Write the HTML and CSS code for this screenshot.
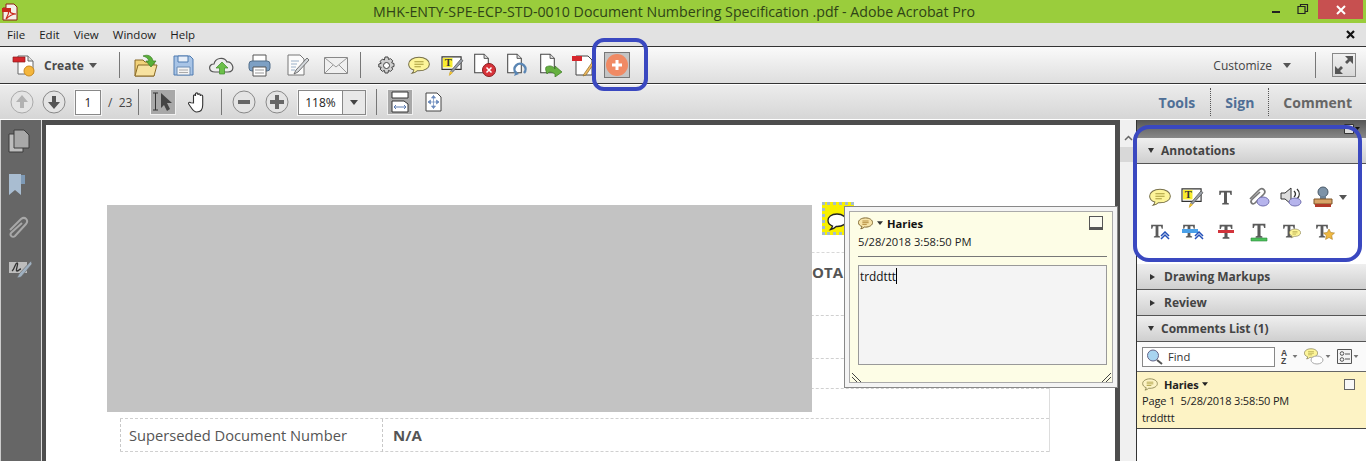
FILE: index.html
```html
<!DOCTYPE html>
<html lang="en">
<head>
<meta charset="utf-8">
<title>Adobe Acrobat Pro</title>
<link rel="stylesheet" href="styles.css">
</head>
<body>
<svg class="defs" width="0" height="0" aria-hidden="true">
  <defs>
    <symbol id="bubble" viewBox="0 0 24 20"><path d="M12 1C5.500 1 .7 4.300.7 8.500c0 2.900 2.300 5.200 5.700 6.400-.3 1.400-1 2.700-2 3.600 2.500-.3 4.400-1.300 5.700-2.800.6.100 1.300.1 1.900.1 6.500 0 11.300-3.200 11.300-7.300S18.500 1 12 1z" fill="#fdf59a" stroke="#77704a" stroke-width="1.100"/><path d="M7 6h10M7 8.700h10M7 11.400h7" stroke="#a89c3c" stroke-width="1.100" fill="none"/></symbol>
    <symbol id="textnote" viewBox="0 0 24 22"><path d="M1 2h20v13H1z" fill="#fff" stroke="#333" stroke-width="1.200"/><path d="M2 3h10v10H2z" fill="#f8ec30"/><text x="4" y="11.500" font-size="11" font-weight="700" fill="#333" font-family="Liberation Serif, serif">T</text><path d="M23 6L12 18l-3 3 1-4L21 4z" fill="#9aa0a8" stroke="#555" stroke-width=".8"/><path d="M8 22l1.500-5 3 1.500z" fill="#f2c230"/></symbol>
    <symbol id="doc" viewBox="0 0 20 24"><path d="M2 1h11l5 5v17H2z" fill="#fff" stroke="#444" stroke-width="1.200"/><path d="M13 1v5h5" fill="#ddd" stroke="#444"/></symbol>
    <symbol id="bigt" viewBox="0 0 18 20"><path d="M1.500 2h15v5h-1.400l-1-3H10.800v12.200l2.200.8v1.500H5V17l2.200-.8V4H3.900l-1 3H1.500z" fill="#5a5a5a"/></symbol>
    <symbol id="chev" viewBox="0 0 10 9"><path d="M1 5l4-4 4 4M1 8l4-4 4 4" fill="none" stroke="#2450b8" stroke-width="1.500"/></symbol>
    <symbol id="caret" viewBox="0 0 8 5"><path d="M0 0h8L4 5z" fill="currentColor"/></symbol>
    <symbol id="round-up" viewBox="0 0 24 24"><circle cx="12" cy="12" r="11" fill="#e4e4e4" stroke="#aaa"/><path d="M12 5l6 7h-4v6h-4v-6H6z" fill="#b2b2b2"/></symbol>
    <symbol id="round-down" viewBox="0 0 24 24"><circle cx="12" cy="12" r="11" fill="#e4e4e4" stroke="#888"/><path d="M12 19l-6-7h4V6h4v6h4z" fill="#555"/></symbol>
    <symbol id="round-minus" viewBox="0 0 24 24"><circle cx="12" cy="12" r="11" fill="#e4e4e4" stroke="#888"/><path d="M6 10h12v4H6z" fill="#666"/></symbol>
    <symbol id="round-plus" viewBox="0 0 24 24"><circle cx="12" cy="12" r="11" fill="#e4e4e4" stroke="#888"/><path d="M10 5h4v5h5v4h-5v5h-4v-5H5v-4h5z" fill="#666"/></symbol>
  </defs>
</svg>

<div class="window">
  <header class="titlebar">
    <svg class="appicon" width="18" height="18" viewBox="0 0 18 18"><path d="M2 5h3V1h8l3 3v13H2z" fill="#f4efe8" stroke="#8e1f16"/><path d="M1 5h9v4H1z" fill="#c9281c"/><path d="M5 16c2-3 3-6 3-10 0 3 2 5 7 5-4 0-7 2-10 5z" fill="none" stroke="#c9281c" stroke-width="1.200"/></svg>
    <h1 class="doc-title">MHK-ENTY-SPE-ECP-STD-0010 Document Numbering Specification .pdf - Adobe Acrobat Pro</h1>
    <div class="winctl">
      <svg class="winbtn" width="26" height="19" viewBox="0 0 26 19"><path d="M6 11h8v2H6z" fill="#222"/></svg>
      <svg class="winbtn" width="26" height="19" viewBox="0 0 26 19"><path d="M6 6.500h7v7H6zM8.500 6.500v-2h7v7h-2.500" fill="none" stroke="#222" stroke-width="1.200"/></svg>
      <div class="closebtn"><svg width="12" height="12" viewBox="0 0 12 12"><path d="M2 2l8 8M10 2l-8 8" stroke="#fff" stroke-width="2"/></svg></div>
    </div>
  </header>

  <nav class="menubar">
    <span>File</span><span>Edit</span><span>View</span><span>Window</span><span>Help</span>
    <svg class="menu-x" width="9" height="9" viewBox="0 0 9 9"><path d="M1 1l7 7M8 1L1 8" stroke="#111" stroke-width="2.200"/></svg>
  </nav>

  <div class="toolbar tb1">
    <svg class="create-icon" width="24" height="24" viewBox="0 0 24 24"><path d="M6 3h10l5 5v13H6z" fill="#fff" stroke="#666"/><path d="M16 3v5h5" fill="#e4e4e4" stroke="#666"/><path d="M1 4h12v5H1z" fill="#d6262c" stroke="#8c1a1e" stroke-width=".7"/><circle cx="17" cy="18" r="5" fill="#f4b63c" stroke="#c98a20"/></svg>
    <b class="create-label">Create</b>
    <svg class="tcaret" width="8" height="5"><use href="#caret"/></svg>
    <i class="sep s-a"></i>
    <div class="slot38"><svg width="26" height="26" viewBox="0 0 26 26"><path d="M2 8h8l2 2h9v14H2z" fill="#f2d27a" stroke="#8a6b28"/><path d="M2 24l3-11h19l-3 11z" fill="#f7e2a0" stroke="#8a6b28"/><path d="M10 4c5-2 9 0 10 5h3l-5 6-5-6h3c-1-3-3-4-6-5z" fill="#58b038" stroke="#3a7d22" stroke-width=".7"/></svg></div>
    <div class="slot38"><svg width="21" height="21" viewBox="0 0 21 21"><path d="M1 1h16l3 3v16H1z" fill="#a8c4e6" stroke="#4f7bb0"/><path d="M5 1h10v6H5z" fill="#e8eff8" stroke="#4f7bb0"/><path d="M4 12h13v8H4z" fill="#f3f3f3" stroke="#6a8cb4"/><path d="M6 15h9M6 17.500h9" stroke="#aaa"/></svg></div>
    <div class="slot38"><svg width="26" height="20" viewBox="0 0 26 20"><path d="M6 17c-7 0-7-8-1-8 1-6 10-8 13-2 6-1 9 10 1 10z" fill="#eee" stroke="#555" stroke-width="1.200"/><path d="M13 7l6 6h-3.500v6h-5v-6H7z" fill="#6cc04a" stroke="#3c8a28" stroke-width=".7"/></svg></div>
    <div class="slot38"><svg width="23" height="23" viewBox="0 0 23 23"><path d="M5 1h13v7H5z" fill="#fff" stroke="#555"/><rect x="1" y="7" width="21" height="10" rx="3" fill="#7da0c4" stroke="#54708c"/><path d="M5 13h13v9H5z" fill="#fff" stroke="#555"/><path d="M7 16h9M7 19h9" stroke="#999"/></svg></div>
    <div class="slot38"><svg width="22" height="22" viewBox="0 0 22 22"><path d="M1 1h12l4 4v16H1z" fill="#fbfbfb" stroke="#777"/><path d="M4 7h8M4 10h6M4 13h5M4 16h4" stroke="#9ab0c8"/><path d="M20 4L9 16l-2 4 4-2L22 6z" fill="#d4d8dc" stroke="#555" stroke-width=".8"/></svg></div>
    <div class="slot38"><svg width="24" height="17" viewBox="0 0 24 17"><path d="M.5.500h23v16H.5z" fill="#f0f0f0" stroke="#888"/><path d="M1 1l11 9L23 1M1 16l8-8M23 16l-8-8" fill="none" stroke="#999"/></svg></div>
    <i class="sep s-b"></i>
    <div class="slot33 first"><svg width="19" height="19" viewBox="0 0 19 19"><path d="M8 1h3l.5 2.500 2-.9 2.200 2.200-1 2 2.300.7v3l-2.300.7 1 2-2.200 2.200-2-1-.5 2.600H8l-.6-2.600-2 1-2.200-2.200 1-2L1.800 11V8l2.400-.7-1-2 2.200-2.200 2 .9z" fill="#cfcfcf" stroke="#444"/><circle cx="9.500" cy="9.500" r="3" fill="#fff" stroke="#444"/></svg></div>
    <div class="slot33"><svg width="22" height="19"><use href="#bubble"/></svg></div>
    <div class="slot33"><svg width="23" height="21"><use href="#textnote"/></svg></div>
    <div class="slot33"><svg class="doc-ic" width="24" height="24" viewBox="0 0 24 24"><use href="#doc" width="17" height="21"/><circle cx="16" cy="17" r="6.500" fill="#d8333a" stroke="#8a1c20"/><path d="M13.500 14.500l5 5M18.500 14.500l-5 5" stroke="#fff" stroke-width="1.500"/></svg></div>
    <div class="slot33"><svg class="doc-ic" width="24" height="24" viewBox="0 0 24 24"><use href="#doc" width="17" height="21"/><path d="M10 20a5.500 5.500 0 1 1 8 0" fill="none" stroke="#5a86b4" stroke-width="2.500"/><path d="M8 23l2-5 3 3z" fill="#5a86b4"/></svg></div>
    <div class="slot33"><svg class="doc-ic" width="24" height="24" viewBox="0 0 24 24"><use href="#doc" width="17" height="21"/><path d="M7 14c4-2 7-1 9 2v-3l7 6-7 5v-3c-3-2-6-3-8 0-1-3-2-5-1-7z" fill="#66b040" stroke="#3c7a24" stroke-width=".7"/></svg></div>
    <div class="slot33"><svg class="doc-ic" width="24" height="24" viewBox="0 0 24 24"><path d="M4 3h12l4 4v15H4z" fill="#fff" stroke="#444"/><path d="M0 3h10v5H0z" fill="#d6262c"/><path d="M21 8L12 21l-1 2 3-1 9-13z" fill="#eeb860" stroke="#8a6b28" stroke-width=".7"/></svg></div>
    <div class="plus-tile"><span class="plus-disc"><svg width="12" height="12" viewBox="0 0 12 12"><path d="M4.500 1h3v3.500H11v3H7.500V11h-3V7.500H1v-3h3.500z" fill="#fff"/></svg></span></div>
    <span class="customize">Customize</span>
    <svg class="tcaret cust-caret" width="8" height="5"><use href="#caret"/></svg>
    <i class="sep s-c"></i>
    <div class="expand"><svg width="22" height="22" viewBox="0 0 22 22"><path d="M12 2h8v8l-3-3-3 3-2-2 3-3zM10 20H2v-8l3 3 3-3 2 2-3 3z" fill="#555"/></svg></div>
  </div>

  <div class="toolbar tb2">
    <svg class="rnd r1" width="24" height="24"><use href="#round-up"/></svg>
    <svg class="rnd r2" width="24" height="24"><use href="#round-down"/></svg>
    <span class="field page-field">1</span>
    <span class="page-total">/&nbsp; 23</span>
    <i class="sep s-d"></i>
    <div class="tile"><svg width="22" height="20" viewBox="0 0 22 20"><path d="M1 1h5M1 18h5M3.500 1v17" stroke="#333" fill="none"/><path d="M9 1l11 10h-5l3 6-3 2-3-6-3 3z" fill="#444"/></svg></div>
    <svg class="hand" width="21" height="22" viewBox="0 0 20 22"><path d="M5 12V5c0-1.500 2-1.500 2 0v-2c0-1.500 2.400-1.500 2.400 0v1c0-1.500 2.400-1.500 2.400 0v1c0-1.500 2.400-1.300 2.400.3V14c0 4-2 7-6 7-3 0-4-2-6-5l-2-3c-.7-1.300 1-2.400 2-1.300z" fill="#fff" stroke="#333" stroke-width="1.100"/></svg>
    <i class="sep s-e"></i>
    <svg class="rnd r3" width="24" height="24"><use href="#round-minus"/></svg>
    <svg class="rnd r4" width="24" height="24"><use href="#round-plus"/></svg>
    <div class="zoombox"><span class="zoomval">118%</span><span class="zoomdrop"><svg width="8" height="5"><use href="#caret"/></svg></span></div>
    <i class="sep s-f"></i>
    <div class="tile t2"><svg width="18" height="22" viewBox="0 0 18 22"><path d="M1 1h16v6H1z" fill="#fff" stroke="#333"/><path d="M1 10h12l4 3v8H1z" fill="#fff" stroke="#333"/><path d="M3 16h12M3 16l2-2M3 16l2 2M15 16l-2-2M15 16l-2 2" stroke="#5a7ab0" fill="none"/></svg></div>
    <svg class="fitpage" width="17" height="20" viewBox="0 0 17 20"><path d="M1 1h11l4 4v14H1z" fill="#fff" stroke="#444"/><path d="M8.500 3.500v13M3 10h11M8.500 3.500l-2 2.500h4zM8.500 16.500l-2-2.500h4zM3 10l2.500-2v4zM14 10l-2.500-2v4z" fill="#6a8abc" stroke="#6a8abc" stroke-width=".7"/></svg>
    <div class="panes">
      <a class="pane blue">Tools</a><i class="dots d1"></i><a class="pane blue">Sign</a><i class="dots"></i><a class="pane gray">Comment</a>
    </div>
  </div>

  <main class="workspace">
    <aside class="rail">
      <svg width="22" height="24" viewBox="0 0 22 24"><path d="M1 5h14v18H1z" fill="#bdbdbd" stroke="#3c3c3c"/><path d="M6 1h10l5 5v13H6z" fill="#a8a8a8" stroke="#3c3c3c"/></svg>
      <svg width="18" height="23" viewBox="0 0 18 23"><path d="M1 1h12v21l-6-5-6 5z" fill="#a9bdd1"/><path d="M13 2h4v9h-4z" fill="#7e9ab6"/></svg>
      <svg width="22" height="24" viewBox="0 0 22 24"><path d="M2 14L13 3c4-3 8 1 5 5L7 20c-2.500 2.500-6-1-3.500-3.500L14 7" fill="none" stroke="#a8a8a8" stroke-width="2"/></svg>
      <svg width="24" height="19" viewBox="0 0 24 19"><path d="M1 2h18v11H1z" fill="#bdbdbd"/><path d="M4 11c3-2 3-8 5-8s-2 8 0 8 2-2 4-2" fill="none" stroke="#333" stroke-width="1.300"/><path d="M23 1L11 14l-2 4 4-1L24 4z" fill="#9fb0c0" stroke="#666" stroke-width=".6"/></svg>
    </aside>

    <section class="viewer">
      <article class="page">
        <div class="doc-table">
          <div class="row r-a"><span class="ota">OTA</span></div>
          <div class="row r-b"></div>
          <div class="row r-c"></div>
          <div class="row r-d"></div>
          <div class="row r-e"><span class="cell-key">Superseded Document Number</span><span class="cell-val">N/A</span></div>
        </div>
        <div class="redact"></div>
        <div class="note-mark"><svg width="22" height="20" viewBox="0 0 22 20"><path d="M11 2C5 2 2 5 2 8.500c0 2.500 1.800 4.500 4.500 5.500-.3 1.400-1 2.500-2 3.500 2.500-.4 4.300-1.500 5.700-3h1c6 0 9-3 9-6S17 2 11 2z" fill="#fff" stroke="#222" stroke-width="1.300"/></svg></div>
        <div class="popup">
          <div class="popup-in">
            <div class="popup-head">
              <svg width="15" height="13" viewBox="0 0 24 20"><path d="M12 1C5.500 1 .7 4.300.7 8.500c0 2.900 2.300 5.200 5.700 6.400-.3 1.400-1 2.700-2 3.600 2.500-.3 4.400-1.300 5.700-2.800.6.100 1.300.1 1.900.1 6.500 0 11.300-3.200 11.300-7.300S18.500 1 12 1z" fill="#f7e4a8" stroke="#77602a" stroke-width="1.500"/><path d="M7 6h10M7 8.700h10M7 11.400h7" stroke="#a87c2c" stroke-width="1.300" fill="none"/></svg>
              <svg class="pcaret" width="6" height="4"><use href="#caret"/></svg>
              <b>Haries</b>
              <span class="minbtn"></span>
            </div>
            <div class="popup-date">5/28/2018 3:58:50 PM</div>
            <div class="popup-body"><span class="typed">trddttt</span></div>
            <div class="grips">
              <svg width="10" height="10" viewBox="0 0 10 10"><path d="M0 1l9 9M0 5l5 5" stroke="#444" fill="none"/></svg>
              <svg width="10" height="10" viewBox="0 0 10 10"><path d="M10 1l-9 9M10 5l-5 5" stroke="#444" fill="none"/></svg>
            </div>
          </div>
        </div>
      </article>
    </section>

    <div class="scrollbar">
      <svg width="9" height="6" viewBox="0 0 9 6"><path d="M1 5l3.500-3.500L8 5" fill="none" stroke="#666" stroke-width="1.500"/></svg>
      <div class="thumb"></div>
    </div>

    <aside class="panel">
      <div class="panel-top">
        <svg width="16" height="10" viewBox="0 0 16 10"><path d="M.5.500h9v9h-9z" fill="#ddd" stroke="#333"/><path d="M11 3h5l-2.500 3z" fill="#111"/></svg>
      </div>
      <div class="sect-head"><span class="tri-d"></span>Annotations</div>
      <div class="annot">
        <div class="annot-row">
          <span class="ai"><svg width="22" height="19"><use href="#bubble"/></svg></span>
          <span class="ai"><svg width="23" height="21"><use href="#textnote"/></svg></span>
          <span class="ai"><svg width="15" height="17"><use href="#bigt"/></svg></span>
          <span class="ai"><svg width="22" height="22" viewBox="0 0 22 22"><path d="M2 13L11 4c3.500-3.500 8 1 4.500 4.500L7 17c-2.500 2.500-5.500-1-3-3.500L12 6" fill="none" stroke="#777" stroke-width="1.700"/><ellipse cx="15" cy="15.500" rx="6" ry="4.500" fill="#b6b4ec" stroke="#7270b0"/></svg></span>
          <span class="ai"><svg width="23" height="22" viewBox="0 0 23 22"><path d="M1 7h4l6-5v16l-6-5H1z" fill="#ddd" stroke="#333"/><path d="M14 5c2 2 2 4 0 6M17 3c3 3 3 7 0 10" fill="none" stroke="#333" stroke-width="1.300"/><ellipse cx="15" cy="16" rx="6" ry="4" fill="#b6b4ec" stroke="#7270b0"/></svg></span>
          <span class="ai stamp"><svg width="22" height="22" viewBox="0 0 22 22"><circle cx="11" cy="6" r="5" fill="#7d93a8" stroke="#4a5a68"/><path d="M8 10h6v4H8z" fill="#6d8296"/><path d="M2 13h18v5H2z" fill="#d8a468" stroke="#7a5428"/><path d="M3 18h16v3H3z" fill="#b33a2a"/></svg><svg class="stamp-caret" width="8" height="5"><use href="#caret"/></svg></span>
        </div>
        <div class="annot-row second">
          <span class="ai"><svg width="20" height="18" viewBox="0 0 20 18"><use href="#bigt" width="14" height="16"/><use href="#chev" x="10" y="8" width="10" height="9"/></svg></span>
          <span class="ai"><svg width="22" height="18" viewBox="0 0 22 18"><use href="#bigt" width="14" height="16"/><path d="M0 6h16v4H0z" fill="#4aa0e8"/><use href="#chev" x="12" y="8" width="10" height="9"/></svg></span>
          <span class="ai"><svg width="18" height="18" viewBox="0 0 18 18"><use href="#bigt" width="18" height="17"/><path d="M1 7h16v3H1z" fill="#d2343c"/></svg></span>
          <span class="ai"><svg width="18" height="20" viewBox="0 0 18 20"><use href="#bigt" width="18" height="17"/><path d="M1 16h16v3H1z" fill="#4cc05a" stroke="#2d8a3c" stroke-width=".6"/></svg></span>
          <span class="ai"><svg width="19" height="18" viewBox="0 0 19 18"><use href="#bigt" width="14" height="16"/><use href="#bubble" x="7" y="5" width="12" height="11"/></svg></span>
          <span class="ai"><svg width="20" height="18" viewBox="0 0 20 18"><use href="#bigt" width="14" height="16"/><path d="M14 6l1.700 3.500 3.800.5-2.800 2.600.7 3.800-3.400-1.900-3.400 1.900.7-3.800L8.500 10l3.800-.5z" fill="#f0b840" stroke="#a87a20" stroke-width=".6"/></svg></span>
        </div>
      </div>
      <div class="sect-head"><span class="tri-r"></span>Drawing Markups</div>
      <div class="sect-head"><span class="tri-r"></span>Review</div>
      <div class="sect-head"><span class="tri-d"></span>Comments List (1)</div>
      <div class="findbar">
        <div class="findbox">
          <svg width="18" height="16" viewBox="0 0 18 16"><circle cx="7" cy="6.500" r="5.500" fill="#a8d4f0" stroke="#668"/><path d="M11 11l5 4" stroke="#555" stroke-width="2"/></svg>
          <span>Find</span>
        </div>
        <div class="findtools">
          <span class="ft"><svg width="11" height="16" viewBox="0 0 11 16"><text x="1" y="7" font-size="8.500" font-weight="700" fill="#444" font-family="Liberation Sans, sans-serif">A</text><text x="1" y="15" font-size="8.500" font-weight="700" fill="#444" font-family="Liberation Sans, sans-serif">Z</text></svg><svg class="ftc" width="6" height="3"><use href="#caret"/></svg></span>
          <span class="ft"><svg width="20" height="17" viewBox="0 0 20 17"><use href="#bubble" width="14" height="12"/><ellipse cx="13" cy="12" rx="6" ry="4" fill="#fff" stroke="#aaa"/></svg><svg class="ftc" width="6" height="3"><use href="#caret"/></svg></span>
          <span class="ft"><svg width="15" height="15" viewBox="0 0 15 15"><path d="M.5.500h14v14H.5z" fill="#f4f4f4" stroke="#555"/><circle cx="5" cy="4.500" r="1.800" fill="none" stroke="#555"/><circle cx="5" cy="10.500" r="1.800" fill="none" stroke="#555"/><path d="M8 5h5M8 10h5" stroke="#555"/></svg><svg class="ftc" width="6" height="3"><use href="#caret"/></svg></span>
        </div>
      </div>
      <div class="comment">
        <div class="comment-head">
          <svg width="16" height="15" viewBox="0 0 24 20"><path d="M12 1.500C5.800 1.500 1 4.600 1 8.700c0 2.800 2.200 5 5.400 6.200-.3 1.400-1 2.600-2 3.500 2.500-.3 4.400-1.300 5.700-2.800.6.100 1.300.1 1.900.1 6.200 0 11-3 11-7S18.200 1.500 12 1.500z" fill="#fdf3c5" stroke="#8a8350" stroke-width="1.300"/><path d="M7 6.500h10M7 9h10M7 11.500h7" stroke="#a89c3c" stroke-width="1.200" fill="none"/></svg>
          <b>Haries</b>
          <svg class="ccaret" width="6" height="4"><use href="#caret"/></svg>
          <span class="chk"></span>
        </div>
        <div class="cline">Page 1&nbsp; 5/28/2018 3:58:50 PM</div>
        <div class="cline">trddttt</div>
      </div>
    </aside>
  </main>

  <div class="ring ring-plus"></div>
  <div class="ring ring-annot"></div>
</div>
</body>
</html>
```

FILE: styles.css
```css
* { box-sizing: border-box; }
html, body { margin: 0; height: 461px; overflow: hidden; background: #fff; }
body { font-family: "Open Sans", "Noto Sans", sans-serif; font-size: 12px; color: #222; }
.defs { position: absolute; }
svg { display: block; flex: none; }
i { font-style: normal; }

.window { position: relative; width: 1366px; height: 461px; overflow: hidden; }

/* Title bar */
.titlebar { height: 23px; background: #9acd3c; display: flex; align-items: flex-start; position: relative; }
.appicon { margin: 3px 0 0 1px; }
.doc-title { position: absolute; left: 373px; top: 2px; margin: 0; font-size: 14.2px; line-height: 20px; font-weight: 400; color: #2f4416; white-space: nowrap; }
.winctl { margin-left: auto; margin-right: 3px; display: flex; }
.closebtn { width: 45px; height: 19px; background: #c75050; display: flex; align-items: center; justify-content: center; }

/* Menu */
.menubar { height: 23px; background: #e2e2e2; display: flex; align-items: center; padding-left: 7px; gap: 14px; font-size: 11.5px; color: #1c1c1c; }
.menu-x { margin-left: auto; margin-right: 11px; }

/* Toolbars */
.toolbar { display: flex; align-items: center; position: relative; }
.tb1 { height: 38px; border-top: 1px solid #333; border-bottom: 1px solid #333; background: linear-gradient(#fafafa, #dedede); padding-left: 12px; }
.tb2 { height: 36px; border-top: 1px solid #fff; border-bottom: 1px solid #fff; background: linear-gradient(#ececec, #d6d6d6); }
.create-label { margin-left: 8px; font-size: 12px; font-weight: 700; color: #4a4a4a; }
.tcaret { color: #555; margin-left: 5px; }
.sep { width: 1px; height: 26px; background: #777; flex: none; }
.s-a { margin-left: 22px; margin-right: 7px; }
.s-b { margin-left: 5px; }
.s-c { margin-left: 24px; }
.slot38 { width: 38px; display: flex; justify-content: center; }
.slot33 { width: 33px; display: flex; justify-content: center; }
.slot33.first { margin-left: 9px; }
.plus-tile { width: 26px; height: 26px; margin-left: 3px; background: #c4c4c4; border: 1px solid #777; display: flex; align-items: center; justify-content: center; }
.plus-disc { width: 22px; height: 22px; border-radius: 50%; background: #f08a64; display: flex; align-items: center; justify-content: center; }
.customize { margin-left: auto; font-size: 12px; color: #444; }
.cust-caret { margin-left: 11px; }
.expand { width: 24px; height: 24px; margin-left: 16px; margin-right: 10px; background: linear-gradient(#f0f0f0, #d8d8d8); border: 1px solid #888; display: flex; align-items: center; justify-content: center; }

.r1 { margin-left: 10px; }
.r2 { margin-left: 8px; }
.field, .zoombox { height: 25px; background: #fff; border: 1px solid #888; box-shadow: 0 0 0 1px #f4f4f4; }
.page-field { width: 26px; margin-left: 9px; display: flex; align-items: center; justify-content: center; font-size: 12px; }
.page-total { margin-left: 7px; width: 25px; font-size: 12px; color: #444; white-space: nowrap; }
.s-d { margin-left: 5px; }
.tile { width: 26px; height: 26px; margin-left: 11px; background: #a8a8a8; border: 1px solid #f0f0f0; display: flex; align-items: center; justify-content: center; }
.hand { margin-left: 12px; }
.s-e { margin-left: 12px; }
.r3 { margin-left: 10px; }
.r4 { margin-left: 9px; }
.zoombox { width: 68px; margin-left: 9px; display: flex; }
.zoomval { flex: 1; display: flex; align-items: center; justify-content: center; font-size: 12px; }
.zoomdrop { width: 23px; border-left: 1px solid #888; background: #e8e8e8; display: flex; align-items: center; justify-content: center; color: #444; }
.s-f { margin-left: 10px; }
.t2 { margin-left: 10px; }
.fitpage { margin-left: 12px; }
.panes { margin-left: auto; margin-right: 14px; display: flex; align-items: center; font-size: 14px; font-weight: 700; }
.pane { display: block; }
.blue { color: #4f6f96; }
.gray { color: #666; }
.dots { width: 0; height: 28px; border-left: 1px dotted #555; margin: 0 14px; }
.d1 { margin-left: 15px; }

/* Workspace */
.workspace { height: 341px; display: flex; align-items: stretch; }
.rail { width: 42px; flex: none; background: #666; border-left: 1px solid #ccc; border-right: 1px solid #ddd; padding-top: 9px; padding-left: 7px; display: flex; flex-direction: column; gap: 20px; align-items: flex-start; }
.viewer { width: 1078px; flex: none; background: #4d4d4d; padding: 5px 5px 0 4px; }
.page { position: relative; height: 336px; background: #fff; padding: 127px 0 0 74px; }

.doc-table { width: 930px; border-top: 1px dashed #d8d8d8; border-right: 1px solid #ddd; }
.row { border-bottom: 1px dashed #d0d0d0; display: flex; align-items: center; color: #555; }
.r-a { height: 63px; padding-left: 692px; align-items: flex-start; padding-top: 9px; }
.r-b { height: 43px; }
.r-c { height: 30px; }
.r-d { height: 30px; }
.r-e { height: 33px; border-left: 1px dashed #c8c8c8; padding-left: 8px; font-size: 15px; }
.ota { font-weight: 700; font-size: 15px; color: #555; }
.cell-key { width: 254px; line-height: 33px; border-right: 1px dashed #c8c8c8; color: #555; font-size: 14.7px; }
.cell-val { margin-left: 10px; font-weight: 700; color: #555; }

.redact { position: absolute; left: 61px; top: 80px; width: 705px; height: 207px; background: #c3c3c3; }
.note-mark { position: absolute; left: 776px; top: 77px; width: 32px; height: 33px; padding: 7px 0 0 1px; background: #f8f000; border: 3px dotted #a4bccc; }
.popup { position: absolute; left: 798px; top: 81px; width: 274px; height: 182px; background: #f4f4f4; border: 1px solid #888; padding: 4px; }
.popup-in { height: 100%; background: #fdfde6; border: 1px solid #aaa; padding: 0 5px 0 8px; }
.popup-head { height: 22px; display: flex; align-items: center; }
.popup-head b { font-size: 11.2px; color: #111; margin-left: 4px; }
.pcaret { color: #333; margin-left: 4px; }
.minbtn { margin-left: auto; margin-right: 4px; width: 14px; height: 14px; border: 1px solid #555; border-bottom-width: 3px; background: #fbfbf0; }
.popup-date { font-size: 11.2px; line-height: 15px; color: #222; padding-bottom: 7px; border-bottom: 1px solid #777; }
.popup-body { height: 100px; margin-top: 8px; background: #f4f4f4; border: 1px solid #999; padding: 1px 1px; font-size: 11.8px; line-height: 18px; color: #111; }
.typed { border-right: 1px solid #000; }
.grips { display: flex; justify-content: space-between; margin: 7px -4px 0 -6px; }

.scrollbar { width: 16px; flex: none; background: #f0f0f0; display: flex; flex-direction: column; align-items: center; padding-top: 15px; }
.thumb { width: 16px; height: 15px; margin-top: 6px; background: #d8d8d8; }

/* Right panel */
.panel { width: 230px; flex: none; border-left: 1px solid #333; background: #fff; display: flex; flex-direction: column; }
.panel-top { height: 18px; background: linear-gradient(#555, #888); display: flex; justify-content: flex-end; padding: 4px 6px 0 0; }
.sect-head { height: 26px; flex: none; background: linear-gradient(#efefef, #cfcfcf); border-bottom: 1px solid #555; display: flex; align-items: center; padding-left: 11px; gap: 7px; font-size: 12px; font-weight: 700; color: #444; }
.tri-d { width: 0; height: 0; border-left: 3.500px solid transparent; border-right: 3.500px solid transparent; border-top: 5px solid #333; }
.tri-r { width: 0; height: 0; border-top: 3.500px solid transparent; border-bottom: 3.500px solid transparent; border-left: 5px solid #333; margin: 0 2px; }
.annot { height: 100px; flex: none; padding: 21px 0 0 6px; }
.annot-row { display: flex; align-items: center; height: 24px; }
.annot-row.second { margin-top: 11px; }
.ai { width: 33px; display: flex; justify-content: center; }
.stamp { gap: 5px; padding-left: 9px; }
.stamp-caret { align-self: center; color: #555; }
.findbar { height: 30px; flex: none; border-bottom: 1px solid #666; background: #fafafa; display: flex; align-items: center; padding-left: 5px; }
.findbox { width: 133px; height: 20px; background: #fff; border: 1px solid #888; display: flex; align-items: center; gap: 4px; padding-left: 3px; font-size: 11.2px; color: #333; }
.findtools { display: flex; margin-left: 5px; gap: 6px; align-items: center; }
.ft { display: flex; align-items: center; gap: 1px; color: #777; }
.comment { height: 57px; flex: none; background: #fdf3c5; border-bottom: 1px solid #444; padding: 3px 6px 0 5px; font-size: 11px; letter-spacing: -.15px; color: #222; }
.comment-head { display: flex; align-items: center; height: 18px; }
.comment-head b { margin-left: 6px; font-size: 11px; color: #222; }
.ccaret { margin-left: 4px; color: #222; }
.chk { margin-left: auto; margin-right: 5px; width: 11px; height: 11px; background: #f8f8f8; border: 1px solid #666; }
.cline { line-height: 16.5px; white-space: nowrap; }

/* Hand-drawn highlights over the UI */
.ring { position: absolute; border: 4px solid #3a48c0; pointer-events: none; }
.ring-plus { left: 592px; top: 38px; width: 56px; height: 53px; border-radius: 12px; }
.ring-annot { left: 1133px; top: 125px; width: 229px; height: 137px; border-radius: 16px; }
```
